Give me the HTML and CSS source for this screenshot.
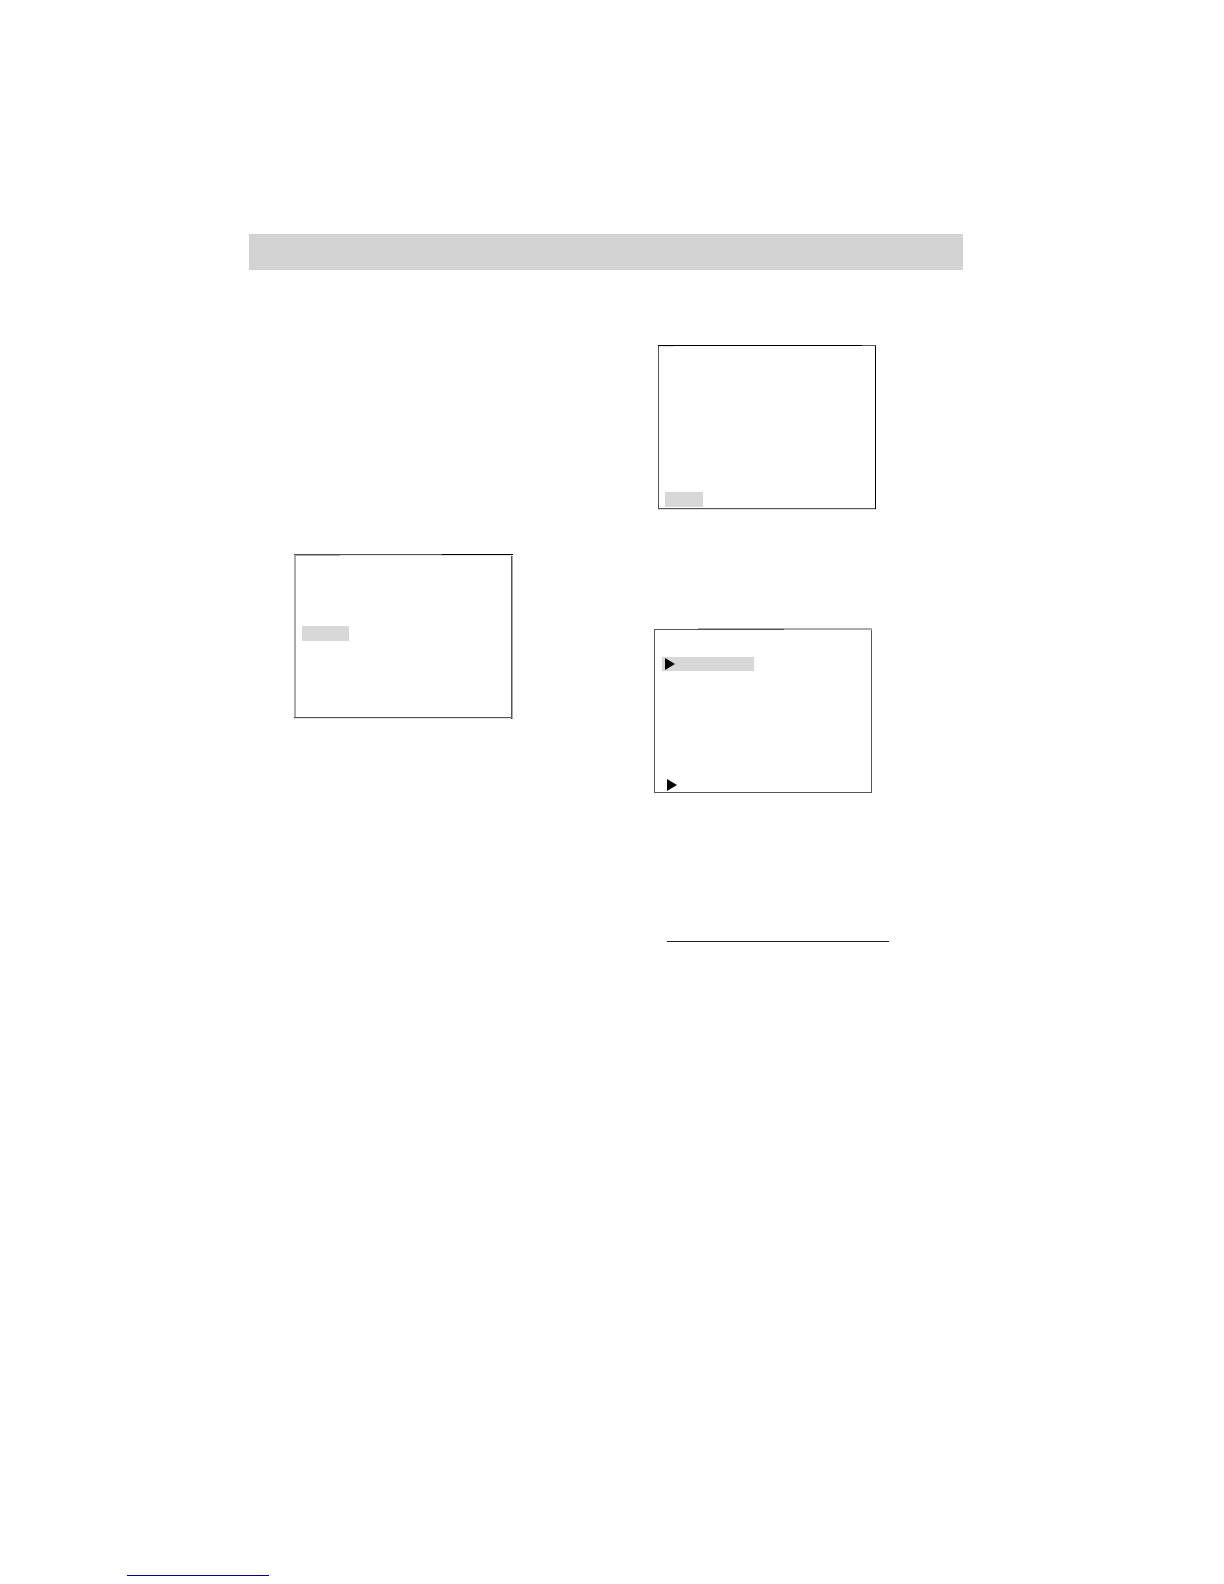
FILE: index.html
```html
<!DOCTYPE html>
<html lang="en">
  <head>
    <meta charset="UTF-8" />
    <meta name="viewport" content="width=device-width, initial-scale=1.0" />
    <title>Document</title>
    <link rel="stylesheet" href="styles.css">
  </head>
  <body>
    <main>
      <div class="title-bar"></div>
      <div class="columns">
        <div class="col-left">
          <div class="screen screen-menu">
            <div class="mark"></div>
          </div>
        </div>
        <div class="col-right">
          <div class="screen screen-exit">
            <div class="mark"></div>
          </div>
          <div class="screen screen-list">
            <div class="mark">
              <svg class="arrow" viewBox="0 0 10 12"><path d="M0 0L10 6L0 12Z" /></svg>
            </div>
            <svg class="arrow" viewBox="0 0 10 12"><path d="M0 0L10 6L0 12Z" /></svg>
          </div>
          <hr class="rule" />
        </div>
      </div>
    </main>
    <footer>
      <a href="#" class="footer-link" aria-label="Home"></a>
    </footer>
  </body>
</html>
```

FILE: styles.css
```css
* {
  margin: 0;
  padding: 0;
  box-sizing: border-box;
}
body {
  min-height: 100vh;
  display: flex;
  flex-direction: column;
  background-color: #fff;
  font-family: "Liberation Sans", Arial, sans-serif;
}
main {
  padding: 234px 261px 0 249px;
}
.title-bar {
  height: 36px;
  background-color: #d2d2d2;
}
.columns {
  display: grid;
  grid-template-columns: 1fr 1fr;
}
.col-left {
  padding: 284px 0 0 45px;
}
.col-right {
  padding: 75px 0 0 48px;
}
.screen {
  width: 218px;
  background-repeat: no-repeat;
}
.mark {
  background-color: #d8d8d8;
}
.arrow {
  display: block;
  width: 10px;
  height: 12px;
}

/* frames: top, right, bottom, left edges */
.screen-menu {
  width: 219px;
  height: 165px;
  padding: 72px 0 0 8px;
  background-image:
    linear-gradient(to right, #555 148px, #000 148px),
    linear-gradient(to right, #aaa 46px, #e8e0e0 46px),
    linear-gradient(to right, #555 1px, #aaa 1px),
    linear-gradient(#555 1px, #e4e4e4 1px),
    linear-gradient(#aaa, #aaa);
  background-size: 100% 1px, 100% 1px, 2px 100%, 100% 2px, 2px 100%;
  background-position: 0 0, 0 1px, right top, left bottom, 0 0;
}
.screen-menu .mark {
  width: 47px;
  height: 15px;
}
.screen-exit {
  height: 165px;
  margin-left: 4px;
  padding: 147px 0 0 7px;
  background-image:
    linear-gradient(to right, #000 204px, #555 204px),
    linear-gradient(#ddd, #ddd),
    linear-gradient(#000, #000),
    linear-gradient(#555 1px, #ddd 1px),
    linear-gradient(#555, #555);
  background-size: 100% 1px, 15px 1px, 1px 164px, 100% 2px, 1px 100%;
  background-position: 0 0, 1px 1px, right top, left bottom, 0 0;
}
.screen-exit .mark {
  width: 38px;
  height: 15px;
}
.screen-list {
  height: 165px;
  margin-top: 118px;
  padding: 29px 0 0 8px;
  background-image:
    linear-gradient(to right, transparent 44px, #aaa 44px),
    linear-gradient(to right, #555 130px, #aaa 130px),
    linear-gradient(#555, #555),
    linear-gradient(#555, #555),
    linear-gradient(#555, #555);
  background-size: 100% 1px, 100% 1px, 1px 164px, 100% 1px, 1px 164px;
  background-position: 0 0, 0 1px, right bottom, left bottom, left bottom;
}
.screen-list .mark {
  width: 92px;
  height: 14px;
  padding: 1px 0 0 3px;
}
.screen-list > .arrow {
  margin: 108px 0 0 5px;
}
.rule {
  width: 222px;
  height: 1px;
  margin: 148px 0 0 13px;
  border: none;
  background-color: #222;
}
footer {
  margin-top: auto;
  padding: 0 127px 8px;
}
.footer-link {
  display: block;
  width: 142px;
  height: 16px;
  border-bottom: 1px solid #000080;
}
```
